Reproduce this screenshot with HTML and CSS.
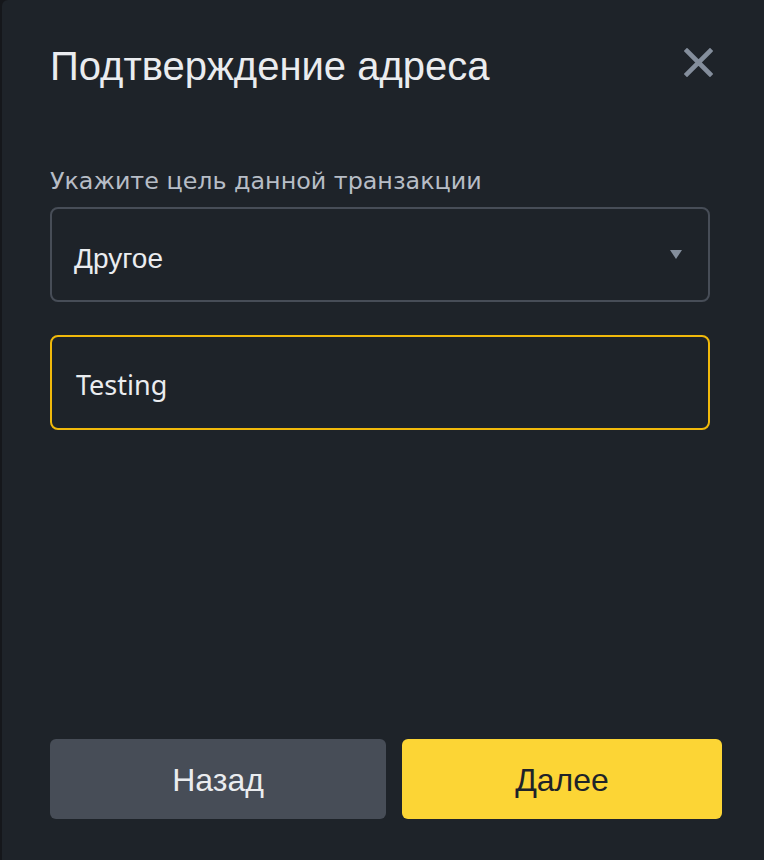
FILE: index.html
```html
<!DOCTYPE html>
<html lang="ru">
<head>
    <meta charset="UTF-8">
    <title>Подтверждение адреса</title>
    <link rel="stylesheet" href="styles.css">
</head>
<body>
    <div class="modal">
        <div class="modal-header">
            <h1 class="modal-title">Подтверждение адреса</h1>
            <button class="close" aria-label="Закрыть">
                <svg width="29" height="29" viewBox="0 0 29 29">
                    <path d="M3 3 L26 26 M26 3 L3 26" stroke="#848e9c" stroke-width="4.6" stroke-linecap="square" fill="none"/>
                </svg>
            </button>
        </div>

        <div class="field-label">Укажите цель данной транзакции</div>
        <div class="select">
            <span class="select-value">Другое</span>
            <span class="caret"></span>
        </div>

        <div class="input">
            <span class="input-value">Testing</span>
        </div>

        <div class="actions">
            <button class="btn btn-back">Назад</button>
            <button class="btn btn-next">Далее</button>
        </div>
    </div>
</body>
</html>
```

FILE: styles.css
```css
body {
    margin: 0;
    background: #15171b;
    font-family: "Liberation Sans", Arial, sans-serif;
    overflow: hidden;
}

.modal {
    margin-left: 2px;
    width: 800px;
    height: 900px;
    box-sizing: border-box;
    padding: 42px 0 0 48px;
    background: #1e2329;
    border-top-left-radius: 6px;
}

.modal-header {
    display: flex;
    align-items: flex-start;
    justify-content: space-between;
    width: 663px;
}

.modal-title {
    margin: 0;
    font-size: 40px;
    font-weight: 400;
    line-height: 48px;
    color: #eaecef;
}

.close {
    margin-top: 6px;
    padding: 0;
    background: none;
    border: none;
    cursor: pointer;
    line-height: 0;
}

.field-label {
    margin-top: 75px;
    font-family: "DejaVu Sans", sans-serif;
    font-size: 23.8px;
    line-height: 32px;
    color: #b7bdc6;
}

.select,
.input {
    display: flex;
    align-items: center;
    width: 660px;
    height: 95px;
    box-sizing: border-box;
    border-radius: 8px;
}

.select {
    margin-top: 10px;
    padding: 8px 26px 0 22px;
    border: 2px solid #474d57;
    justify-content: space-between;
}

.select-value {
    font-size: 28px;
    color: #eaecef;
}

.caret {
    width: 0;
    height: 0;
    border-left: 6px solid transparent;
    border-right: 6px solid transparent;
    border-top: 9px solid #848e9c;
    margin-bottom: 8px;
}

.input {
    margin-top: 33px;
    padding: 4px 24px 0 24px;
    border: 2px solid #f0b90b;
}

.input-value {
    font-family: "Noto Sans", sans-serif;
    font-size: 27px;
    color: #eaecef;
}

.actions {
    display: flex;
    gap: 16px;
    width: 672px;
    margin-top: 309px;
}

.btn {
    height: 80px;
    padding: 3px 0 0;
    border: none;
    border-radius: 6px;
    font-family: "Liberation Sans", Arial, sans-serif;
    font-size: 32px;
    cursor: pointer;
}

.btn-back {
    width: 336px;
    background: #474d57;
    color: #eaecef;
}

.btn-next {
    flex: 1;
    background: #fcd535;
    color: #1e2329;
}
```
